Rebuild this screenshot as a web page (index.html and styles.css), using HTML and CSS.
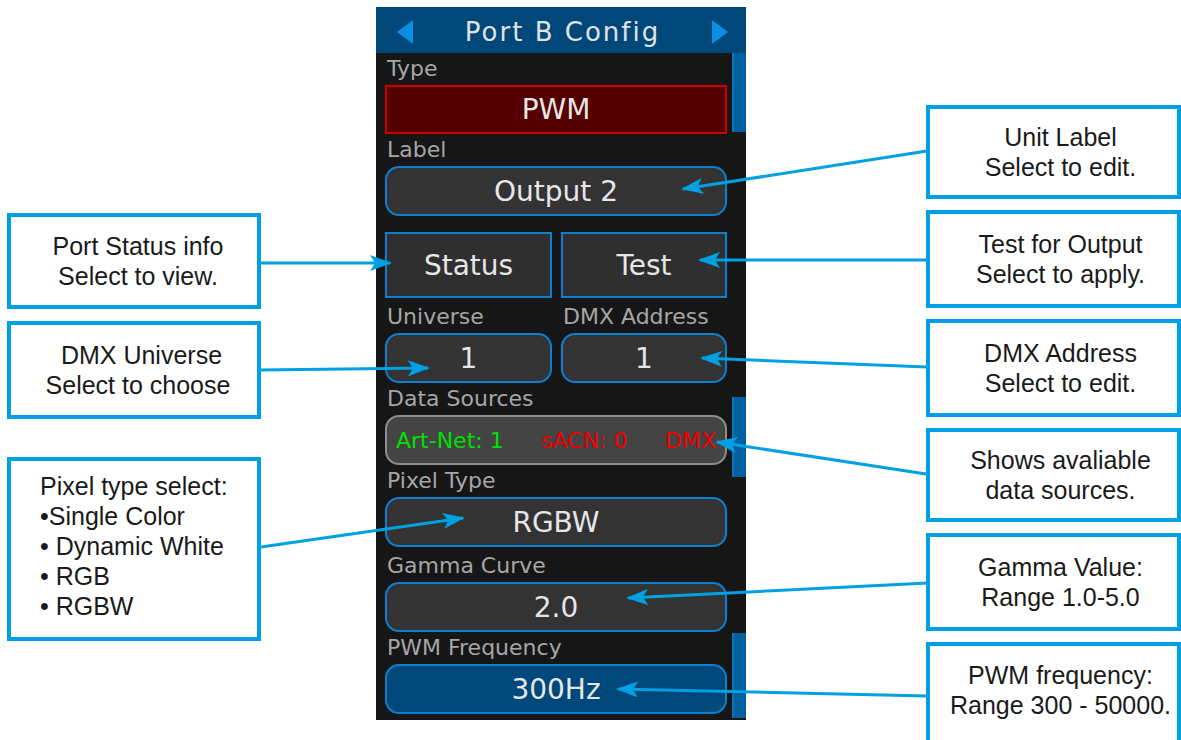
FILE: index.html
```html
<!DOCTYPE html>
<html lang="en">
<head>
    <meta charset="UTF-8">
    <meta name="viewport" content="width=device-width, initial-scale=1.0">
    <title>Port B Config</title>
    <link rel="stylesheet" href="styles.css">
</head>
<body>
    <div class="page">
        <div class="notes notes-left">
            <div class="note note-left">Port Status info<br>Select to view.</div>
            <div class="note note-left note-tall">&nbsp;DMX Universe<br>Select to choose</div>
            <div class="note note-list">Pixel type select:<br>•Single Color<br>• Dynamic White<br>• RGB<br>• RGBW</div>
        </div>

        <div class="device">
            <div class="device-head">
                <span class="nav nav-prev"></span>
                <span class="device-title">Port B Config</span>
                <span class="nav nav-next"></span>
            </div>
            <div class="device-body">
                <div class="settings">
                    <div class="label">Type</div>
                    <div class="field field-type">PWM</div>

                    <div class="label">Label</div>
                    <div class="field">Output 2</div>

                    <div class="pair buttons">
                        <div class="btn">Status</div>
                        <div class="btn">Test</div>
                    </div>

                    <div class="pair">
                        <div class="label label-lower">Universe</div>
                        <div class="label label-lower">DMX Address</div>
                        <div class="field">1</div>
                        <div class="field">1</div>
                    </div>

                    <div class="label">Data Sources</div>
                    <div class="field field-sources">
                        <span class="src-on">Art-Net: 1</span>
                        <span class="src-off">sACN: 0</span>
                        <span class="src-off">DMX</span>
                    </div>

                    <div class="label">Pixel Type</div>
                    <div class="field">RGBW</div>

                    <div class="label label-lower">Gamma Curve</div>
                    <div class="field">2.0</div>

                    <div class="label">PWM Frequency</div>
                    <div class="field field-active">300Hz</div>
                </div>
                <div class="scroll">
                    <div class="thumb thumb-top"></div>
                    <div class="thumb thumb-mid"></div>
                    <div class="thumb thumb-end"></div>
                </div>
            </div>
        </div>

        <div class="notes notes-right">
            <div class="note">Unit Label<br>Select to edit.</div>
            <div class="note note-tall">Test for Output<br>Select to apply.</div>
            <div class="note note-tall">DMX Address<br>Select to edit.</div>
            <div class="note">Shows avaliable<br>data sources.</div>
            <div class="note note-tall">Gamma Value:<br>Range 1.0-5.0</div>
            <div class="note note-cut">PWM frequency:<br>Range 300 - 50000.</div>
        </div>
    </div>

    <!-- leader lines from the notes to the screen items -->
    <svg class="leaders" width="1181" height="740" viewBox="0 0 1181 740">
        <defs>
            <marker id="tip" markerWidth="22" markerHeight="16" refX="20" refY="8" orient="auto" markerUnits="userSpaceOnUse">
                <path d="M0,0 L22,8 L0,16 L5,8 z" fill="#00a0e3"/>
            </marker>
        </defs>
        <g stroke="#00a0e3" stroke-width="3" fill="none" marker-end="url(#tip)">
            <line x1="927" y1="151" x2="683" y2="189"/>
            <line x1="928" y1="260" x2="700" y2="260"/>
            <line x1="258" y1="263" x2="390" y2="263"/>
            <line x1="260" y1="370" x2="428" y2="368"/>
            <line x1="927" y1="367" x2="702" y2="358"/>
            <line x1="926" y1="474" x2="717" y2="442"/>
            <line x1="261" y1="547" x2="463" y2="518"/>
            <line x1="928" y1="583" x2="628" y2="598"/>
            <line x1="927" y1="696" x2="618" y2="689"/>
        </g>
    </svg>
</body>
</html>
```

FILE: styles.css
```css
body {
    margin: 0;
    height: 740px;
    overflow: hidden;
    position: relative;
    background-color: #fff;
}
.page {
    display: flex;
    align-items: flex-start;
    height: 740px;
}

/* callout boxes */
.notes {
    display: flex;
    flex-direction: column;
}
.notes-left {
    width: 254px;
    margin-left: 7px;
    padding-top: 213px;
    gap: 12px;
}
.notes-right {
    width: 255px;
    margin-left: 180px;
    padding-top: 105px;
    gap: 11px;
}
.note {
    box-sizing: border-box;
    height: 94px;
    border: 4px solid #00a0e3;
    padding-left: 14px;
    display: flex;
    flex-direction: column;
    justify-content: center;
    align-items: center;
    text-align: center;
    font-family: "Liberation Sans", Arial, sans-serif;
    font-size: 25px;
    line-height: 30px;
    color: #1a1a1a;
    background-color: #fff;
    white-space: nowrap;
}
.note-left {
    padding-left: 8px;
    height: 96px;
}
.note-tall {
    height: 98px;
}
.note-cut {
    height: 110px;
    padding-bottom: 14px;
}
.note-list {
    height: 184px;
    margin-top: 26px;
    padding: 10px 0 0 29px;
    justify-content: flex-start;
    align-items: flex-start;
    text-align: left;
}

/* device screen */
.device {
    width: 370px;
    height: 713px;
    margin-left: 115px;
    margin-top: 7px;
    background-color: #161616;
    font-family: "DejaVu Sans", sans-serif;
    color: #e6e6e6;
}
.device-head {
    height: 46px;
    box-sizing: border-box;
    padding: 3px 18px 0 21px;
    background-color: #00487a;
    display: flex;
    align-items: center;
    justify-content: space-between;
}
.device-title {
    font-size: 26px;
    letter-spacing: 2px;
    color: #e2e2e2;
}
.nav {
    width: 0;
    height: 0;
    border-top: 12px solid transparent;
    border-bottom: 12px solid transparent;
}
.nav-prev {
    border-right: 16px solid #0a8fe6;
}
.nav-next {
    border-left: 16px solid #0a8fe6;
}
.device-body {
    display: flex;
    padding-left: 9px;
    gap: 5px;
}
.settings {
    width: 342px;
}
.label {
    height: 32px;
    line-height: 32px;
    padding-left: 2px;
    font-size: 22px;
    color: #a6a6a6;
    white-space: nowrap;
}
.label-lower {
    height: 35px;
    line-height: 38px;
}
.field {
    box-sizing: border-box;
    height: 50px;
    border: 2px solid #0a80d0;
    border-radius: 14px;
    background-color: #333;
    display: flex;
    align-items: center;
    justify-content: center;
    font-size: 28px;
}
.field-type {
    height: 49px;
    border-color: #cc0000;
    border-radius: 0;
    background-color: #540000;
}
.field-active {
    background-color: #00487a;
}
.field-sources {
    justify-content: space-between;
    padding: 0 9px;
    border-color: #8c8c8c;
    background-color: #444;
    font-size: 22px;
    overflow: hidden;
    white-space: nowrap;
}
.src-on {
    color: #00e000;
}
.src-off {
    color: #ee0000;
}
.pair {
    display: grid;
    grid-template-columns: 167px 166px;
    column-gap: 9px;
}
.buttons {
    margin-top: 16px;
}
.btn {
    box-sizing: border-box;
    height: 66px;
    border: 2px solid #0a80d0;
    background-color: #2f2f2f;
    display: flex;
    align-items: center;
    justify-content: center;
    font-size: 28px;
}
.scroll {
    width: 14px;
    display: flex;
    flex-direction: column;
}
.thumb {
    background-color: #0060a0;
    border-left: 2px solid #0a74bc;
}
.thumb-top {
    height: 79px;
}
.thumb-mid {
    height: 80px;
    margin-top: 265px;
}
.thumb-end {
    height: 85px;
    margin-top: 156px;
}

.leaders {
    position: absolute;
    left: 0;
    top: 0;
    pointer-events: none;
}
```
